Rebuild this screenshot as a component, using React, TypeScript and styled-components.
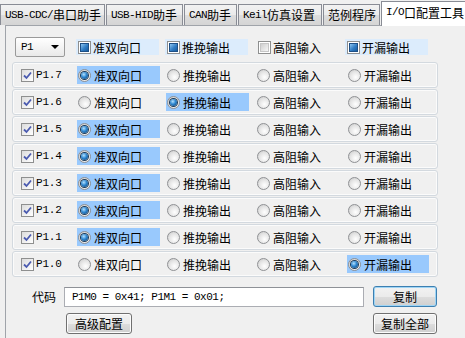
import React, { useState } from "react";
import styled, { createGlobalStyle } from "styled-components";

const GlobalStyle = createGlobalStyle`
  html, body { margin: 0; padding: 0; background: #f0f0f0; }
  body { font-family: "Noto Sans CJK SC", "Noto Sans", sans-serif; font-size: 12px; color: #000; }
`;

const MODES = ["准双向口", "推挽输出", "高阻输入", "开漏输出"];
const PINS = [7, 6, 5, 4, 3, 2, 1, 0];
const INITIAL: Record<number, number> = { 7: 0, 6: 1, 5: 0, 4: 0, 3: 0, 2: 0, 1: 0, 0: 3 };

const TABS = [
  { ascii: "USB-CDC/", cjk: "串口助手", width: 105 },
  { ascii: "USB-HID", cjk: "助手", width: 77 },
  { ascii: "CAN", cjk: "助手", width: 53 },
  { ascii: "Keil", cjk: "仿真设置", width: 84 },
  { ascii: "", cjk: "范例程序", width: 57 },
  { ascii: "I/O", cjk: "口配置工具", width: 90, active: true },
];

const Root = styled.div`
  width: 465px;
  height: 338px;
  overflow: hidden;
  display: flex;
  flex-direction: column;
  background: #f0f0f0;
`;

const TabBar = styled.div`
  display: flex;
  align-items: flex-end;
  gap: 1px;
  height: 25px;
  position: relative;
  z-index: 1;
`;

const Tab = styled.div<{ $w: number; $active?: boolean }>`
  box-sizing: border-box;
  flex: none;
  width: ${(p) => p.$w}px;
  height: ${(p) => (p.$active ? 25 : 21)}px;
  margin-bottom: ${(p) => (p.$active ? -1 : 0)}px;
  border: 1px solid #898c95;
  border-bottom: none;
  background: ${(p) =>
    p.$active ? "#ffffff" : "linear-gradient(#f2f2f2, #ebebeb 50%, #dddddd 51%, #d5d5d5)"};
  display: flex;
  align-items: center;
  padding: 0 0 ${(p) => (p.$active ? 3 : 0)}px 4px;
  white-space: nowrap;
  font-size: 12px;
  line-height: 1;
`;

const Mono = styled.span`
  font-family: "Liberation Mono", "DejaVu Sans Mono", monospace;
  font-size: 11px;
  letter-spacing: -0.6px;
`;

const Panel = styled.div`
  flex: 1;
  margin-left: 5px;
  border-left: 1px solid #a0a4aa;
  border-top: 1px solid #a0a4aa;
  padding: 10px 0 0 6px;
`;

const Header = styled.div`
  display: grid;
  grid-template-columns: 64px 89px 91px 89px 90px;
  align-items: center;
  height: 22px;
  margin-bottom: 4px;
`;

const Select = styled.div`
  box-sizing: border-box;
  width: 50px;
  height: 20px;
  margin-left: 3px;
  border: 1px solid #9a9a9a;
  border-radius: 2px;
  background: linear-gradient(#ffffff, #f4f4f4 50%, #e9e9e9);
  display: flex;
  align-items: center;
  justify-content: space-between;
  padding: 0 5px 0 5px;
`;

const Arrow = styled.span`
  width: 0;
  height: 0;
  border-left: 4px solid transparent;
  border-right: 4px solid transparent;
  border-top: 4px solid #000;
`;

const HeadItem = styled.label<{ $on: boolean }>`
  width: 83px;
  height: 16px;
  display: flex;
  align-items: center;
  gap: 2px;
  padding-left: 2px;
  box-sizing: border-box;
  background: ${(p) => (p.$on ? "#dcecfc" : "transparent")};
  white-space: nowrap;
`;

const SquareBox = styled.span<{ $on: boolean }>`
  box-sizing: border-box;
  width: 13px;
  height: 13px;
  border: 1px solid #8e8f8f;
  background: #fff;
  display: flex;
  align-items: center;
  justify-content: center;
  &::after {
    content: "";
    width: 9px;
    height: 9px;
    box-sizing: border-box;
    border: 1px solid ${(p) => (p.$on ? "#1d4f86" : "#c6c6c6")};
    background: ${(p) =>
      p.$on
        ? "linear-gradient(135deg, #8cc4f0, #2f7cc4 55%, #1a5c9e)"
        : "linear-gradient(135deg, #cfcfcf, #f6f6f6)"};
  }
`;

const Rows = styled.div`
  display: flex;
  flex-direction: column;
  gap: 1px;
`;

const Row = styled.div`
  box-sizing: border-box;
  width: 426px;
  height: 26px;
  border: 1px solid #d3d9df;
  border-radius: 3px;
  box-shadow: inset 0 0 0 1px #fbfbfb;
  display: grid;
  grid-template-columns: 64px 89px 90px 91px 82px;
  align-items: center;
`;

const PinCell = styled.label`
  display: flex;
  align-items: center;
  gap: 2px;
  padding-left: 8px;
`;

const CheckBox = styled.span`
  box-sizing: border-box;
  width: 13px;
  height: 13px;
  border: 1px solid #8e8f8f;
  background: linear-gradient(135deg, #dcdcdc, #ffffff);
  display: flex;
  align-items: center;
  justify-content: center;
`;

const PinName = styled(Mono)`
  font-size: 11px;
  letter-spacing: -0.2px;
`;

const RadioItem = styled.label<{ $on: boolean; $w: number }>`
  box-sizing: border-box;
  width: ${(p) => p.$w}px;
  height: 18px;
  display: flex;
  align-items: center;
  gap: 3px;
  padding-left: 1px;
  background: ${(p) => (p.$on ? "#99c9fd" : "transparent")};
  white-space: nowrap;
  cursor: default;
`;

const Radio = styled.span<{ $on: boolean }>`
  box-sizing: border-box;
  width: 13px;
  height: 13px;
  border-radius: 50%;
  border: 1px solid #8f9194;
  background: radial-gradient(circle at 60% 65%, #ffffff, #e4e4e4 55%, #c4c4c4);
  display: flex;
  align-items: center;
  justify-content: center;
  &::after {
    content: "";
    display: ${(p) => (p.$on ? "block" : "none")};
    width: 7px;
    height: 7px;
    border-radius: 50%;
    background: radial-gradient(circle at 40% 35%, #b4e2ff, #2d86d0 45%, #0b3d6e);
    box-shadow: 0 0 0 1px #1c3a58;
  }
`;

const Bottom = styled.div`
  display: grid;
  grid-template-columns: 52px 309px 64px;
  grid-template-rows: 21px 21px;
  row-gap: 6px;
  align-items: center;
  margin-top: 9px;
`;

const CodeLabel = styled.span`
  padding-left: 20px;
`;

const CodeInput = styled.input`
  box-sizing: border-box;
  width: 300px;
  height: 20px;
  border: 1px solid #abadb3;
  border-top-color: #8e9197;
  background: #fff;
  padding: 0 7px;
  font-family: "Liberation Mono", "DejaVu Sans Mono", monospace;
  font-size: 11px;
  letter-spacing: -0.5px;
  color: #000;
  outline: none;
`;

const Button = styled.button<{ $focused?: boolean; $w: number; $offset?: number }>`
  box-sizing: border-box;
  width: ${(p) => p.$w}px;
  height: 21px;
  margin-left: ${(p) => p.$offset ?? 0}px;
  padding: 0;
  border: 1px solid ${(p) => (p.$focused ? "#3c7fb1" : "#707070")};
  border-radius: 3px;
  box-shadow: ${(p) => (p.$focused ? "inset 0 0 0 1px #9fd5f5" : "inset 0 0 0 1px #fcfcfc")};
  background: linear-gradient(#f2f2f2, #ebebeb 50%, #dddddd 51%, #cfcfcf);
  font-family: "Noto Sans CJK SC", sans-serif;
  font-size: 12px;
  color: #000;
  line-height: 1;
`;

const CheckMark = () => (
  <svg width="9" height="9" viewBox="0 0 9 9">
    <path d="M1 4.5 L3.5 7 L8 1.5" fill="none" stroke="#4b5bb0" strokeWidth="1.8" />
  </svg>
);

export default function App() {
  const [modes, setModes] = useState<Record<number, number>>(INITIAL);
  const headOn = [true, true, false, true];

  return (
    <Root>
      <GlobalStyle />
      <TabBar>
        {TABS.map((t) => (
          <Tab key={t.cjk + t.ascii} $w={t.width} $active={t.active}>
            {t.ascii && <Mono>{t.ascii}</Mono>}
            {t.cjk}
          </Tab>
        ))}
      </TabBar>
      <Panel>
        <Header>
          <Select>
            <Mono>P1</Mono>
            <Arrow />
          </Select>
          {MODES.map((m, i) => (
            <HeadItem key={m} $on={headOn[i]}>
              <SquareBox $on={headOn[i]} />
              {m}
            </HeadItem>
          ))}
        </Header>
        <Rows>
          {PINS.map((pin) => (
            <Row key={pin}>
              <PinCell>
                <CheckBox>
                  <CheckMark />
                </CheckBox>
                <PinName>P1.{pin}</PinName>
              </PinCell>
              {MODES.map((m, i) => {
                const on = modes[pin] === i;
                return (
                  <RadioItem
                    key={m}
                    $on={on}
                    $w={i === 3 ? 82 : 83}
                    onClick={() => setModes({ ...modes, [pin]: i })}
                  >
                    <Radio $on={on} />
                    {m}
                  </RadioItem>
                );
              })}
            </Row>
          ))}
        </Rows>
        <Bottom>
          <CodeLabel>代码</CodeLabel>
          <CodeInput readOnly value="P1M0 = 0x41; P1M1 = 0x01;" />
          <Button $w={64} $focused>复制</Button>
          <span />
          <Button $w={66} $offset={2}>高级配置</Button>
          <Button $w={64}>复制全部</Button>
        </Bottom>
      </Panel>
    </Root>
  );
}
